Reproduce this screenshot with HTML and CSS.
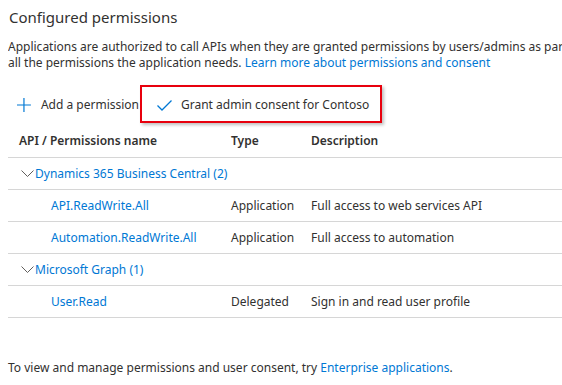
FILE: index.html
```html
<!doctype html>
<html lang="en">
<head>
	<meta charset="UTF-8">
	<meta name="viewport" content="width=device-width">
	<title>Configured permissions</title>
<link rel="stylesheet" href="styles.css">
</head>
<body>

<section class="perms">
<h2>Configured permissions</h2>
<p class="intro">Applications are authorized to call APIs when they are granted permissions by users/admins as part of the consent process. The list of configured permissions should include<br>all the permissions the application needs. <a href="#">Learn more about permissions and consent</a></p>

<div class="toolbar">
	<button class="cmd add">
		<svg width="14" height="14" viewBox="0 0 14 14"><path d="M7 0v14M0 7h14" stroke="#0078d4" stroke-width="1.2" fill="none"/></svg>
		Add a permission
	</button>
	<div class="callout"></div>
	<button class="cmd grant">
		<svg width="15" height="11" viewBox="0 0 15 11"><path d="M0.5 5.5l4.5 4.5l9.5-9.5" stroke="#0078d4" stroke-width="1.3" fill="none"/></svg>
		Grant admin consent for Contoso
	</button>
</div>

<div class="grid">
	<div class="row head">
		<div class="c-name">API / Permissions name</div>
		<div class="c-type">Type</div>
		<div class="c-desc">Description</div>
	</div>
	<div class="row group">
		<div class="c-name"><svg width="13" height="7" viewBox="0 0 13 7"><path d="M0.5 0.5l6 6l6-6" stroke="#605e5c" stroke-width="1" fill="none"/></svg><a href="#">Dynamics 365 Business Central (2)</a></div>
	</div>
	<div class="row">
		<div class="c-name child"><a href="#">API.ReadWrite.All</a></div>
		<div class="c-type">Application</div>
		<div class="c-desc">Full access to web services API</div>
	</div>
	<div class="row">
		<div class="c-name child"><a href="#">Automation.ReadWrite.All</a></div>
		<div class="c-type">Application</div>
		<div class="c-desc">Full access to automation</div>
	</div>
	<div class="row group">
		<div class="c-name"><svg width="13" height="7" viewBox="0 0 13 7"><path d="M0.5 0.5l6 6l6-6" stroke="#605e5c" stroke-width="1" fill="none"/></svg><a href="#">Microsoft Graph (1)</a></div>
	</div>
	<div class="row">
		<div class="c-name child"><a href="#">User.Read</a></div>
		<div class="c-type">Delegated</div>
		<div class="c-desc">Sign in and read user profile</div>
	</div>
</div>

<p class="footer">To view and manage permissions and user consent, try <a href="#">Enterprise applications</a>.</p>
</section>

</body>
</html>
```

FILE: styles.css
```css
body {
	margin: 0;
	overflow: hidden;
	font-family: "Noto Sans", "Open Sans", sans-serif;
	font-size: 12px;
	line-height: 16px;
	color: #323130;
}
.perms {
	padding: 6px 0 0 8px;
	width: 554px;
}
h2 {
	margin: 0 0 0 1px;
	font-size: 15px;
	font-weight: 400;
	line-height: 22px;
}
a {
	color: #0078d4;
	text-decoration: none;
}
.intro {
	margin: 11px 0 0 0;
	white-space: nowrap;
	overflow: hidden;
}
.toolbar {
	position: relative;
	display: flex;
	align-items: center;
	height: 40px;
	margin-top: 14px;
}
.cmd {
	display: flex;
	align-items: center;
	gap: 10px;
	height: 40px;
	padding: 0 9px;
	border: 0;
	background: none;
	font: inherit;
	color: #323130;
	white-space: nowrap;
}
.cmd.add {
	width: 140px;
}
.cmd.grant {
	position: relative;
	padding-left: 9px;
	gap: 9px;
}
.callout {
	position: absolute;
	left: 132px;
	top: 0;
	width: 238px;
	height: 34px;
	border: 2px solid #e8000d;
	background: #fff;
	box-shadow: 2px 2px 3px rgba(0, 0, 0, .25);
	pointer-events: none;
}
.grid {
	width: 554px;
}
.row {
	display: flex;
	align-items: center;
	height: 31px;
	border-bottom: 1px solid #d6d6d6;
}
.row.head {
	height: 32px;
	font-weight: 600;
}
.c-name {
	display: flex;
	align-items: center;
	width: 212px;
	padding-left: 11px;
	white-space: nowrap;
}
.c-name svg {
	margin: 0 1px 0 2px;
}
.c-name.child {
	padding-left: 43px;
	width: 180px;
}
.c-type {
	width: 80px;
}
.footer {
	margin: 42px 0 0 0;
}
```
